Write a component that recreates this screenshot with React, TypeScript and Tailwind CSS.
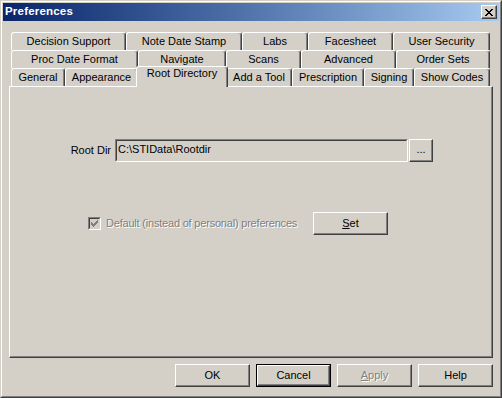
import React from "react";

const raised =
  "border border-t-white border-l-white border-r-[#404040] border-b-[#404040] shadow-[inset_-1px_-1px_0_#808080] bg-[#d4d0c8]";

const rows: { label: string; w: number; selected?: boolean }[][] = [
  [
    { label: "Decision Support", w: 115 },
    { label: "Note Date Stamp", w: 116 },
    { label: "Labs", w: 66 },
    { label: "Facesheet", w: 85 },
    { label: "User Security", w: 97 },
  ],
  [
    { label: "Proc Date Format", w: 127 },
    { label: "Navigate", w: 88 },
    { label: "Scans", w: 75 },
    { label: "Advanced", w: 95 },
    { label: "Order Sets", w: 94 },
  ],
  [
    { label: "General", w: 54 },
    { label: "Appearance", w: 73 },
    { label: "Root Directory", w: 88, selected: true },
    { label: "Add a Tool", w: 66 },
    { label: "Prescription", w: 72 },
    { label: "Signing", w: 50 },
    { label: "Show Codes", w: 76 },
  ],
];

function Tab({ label, w, selected }: { label: string; w: number; selected?: boolean }) {
  if (selected) {
    return (
      <div
        className="relative z-10 -mx-[2px] -mt-[2px] h-[21px] -mb-[1px] flex items-start justify-center pt-[1px] bg-[#d4d0c8] border-l border-t border-l-white border-t-white border-r border-r-[#404040] shadow-[inset_-1px_0_0_#808080] rounded-tl-[3px] rounded-tr-[3px]"
        style={{ width: w + 4 }}
      >
        {label}
      </div>
    );
  }
  return (
    <div
      className="h-[18px] flex items-center justify-center bg-[#d4d0c8] border-l border-t border-l-white border-t-white border-r border-r-[#404040] shadow-[inset_-1px_0_0_#808080] rounded-tl-[3px] rounded-tr-[3px]"
      style={{ width: w }}
    >
      {label}
    </div>
  );
}

function Button({ children, def, disabled }: { children: React.ReactNode; def?: boolean; disabled?: boolean }) {
  const inner = (
    <div
      className={`${raised} h-full w-full flex items-center justify-center ${
        disabled ? "text-[#808080] [text-shadow:1px_1px_0_#ffffff]" : "text-black"
      }`}
    >
      {children}
    </div>
  );
  if (def) {
    return <div className="w-[75px] h-[23px] border border-black">{inner}</div>;
  }
  return <div className="w-[75px] h-[23px]">{inner}</div>;
}

export default function App() {
  return (
    <div
      className="w-[502px] h-[398px] bg-[#d4d0c8] border border-t-[#d4d0c8] border-l-[#d4d0c8] border-r-[#404040] border-b-[#404040] text-[11px] text-black leading-none"
      style={{ fontFamily: '"Liberation Sans", Arial, sans-serif' }}
    >
      <div className="h-full border border-t-white border-l-white border-r-[#808080] border-b-[#808080] p-[1px] flex flex-col">
        {/* title bar */}
        <div className="h-[18px] flex items-center justify-between bg-gradient-to-r from-[#0a246a] to-[#a6caf0] pl-[2px] pr-[2px]">
          <span className="text-white font-bold text-[11.5px] tracking-[0.2px]">Preferences</span>
          <div className={`${raised} w-[16px] h-[14px] flex items-center justify-center`}>
            <svg width="8" height="7" viewBox="0 0 8 7" shapeRendering="crispEdges">
              <path d="M0 0h2v1H0zM6 0h2v1H6zM1 1h2v1H1zM5 1h2v1H5zM2 2h4v1H2zM3 3h2v1H3zM2 4h4v1H2zM1 5h2v1H1zM5 5h2v1H5zM0 6h2v1H0zM6 6h2v1H6z" fill="#000" />
            </svg>
          </div>
        </div>

        {/* tabs + panel */}
        <div className="pl-[6px] pr-[6px] pt-[11px]">
          <div className="pl-[2px] flex flex-col">
            {rows.map((row, i) => (
              <div key={i} className="flex">
                {row.map((t) => (
                  <Tab key={t.label} {...t} />
                ))}
              </div>
            ))}
          </div>
          <div className="h-[272px] border border-t-white border-l-white border-r-[#404040] border-b-[#404040] shadow-[inset_-1px_-1px_0_#808080] flex flex-col pt-[52px]">
            <div className="flex items-center pl-[57px]">
              <span className="w-[44px] text-right mr-[4px]">Root Dir</span>
              <div className="w-[293px] h-[23px] border border-t-[#808080] border-l-[#808080] border-r-white border-b-white">
                <div className="h-full border border-t-[#404040] border-l-[#404040] border-r-[#d4d0c8] border-b-[#d4d0c8] pl-[1px] pt-[3px] bg-[#d4d0c8]">
                  {"C:\\STIData\\Rootdir"}
                </div>
              </div>
              <div className="ml-[1px] w-[24px] h-[23px]">
                <div className={`${raised} h-full flex items-center justify-center pb-[2px]`}>...</div>
              </div>
            </div>

            <div className="flex items-center mt-[50px] pl-[78px]">
              <div className="w-[13px] h-[13px] border border-t-[#808080] border-l-[#808080] border-r-white border-b-white">
                <div className="w-full h-full border border-t-[#404040] border-l-[#404040] border-r-[#d4d0c8] border-b-[#d4d0c8] bg-[#d4d0c8] flex items-center justify-center">
                  <svg width="7" height="7" viewBox="0 0 7 7" shapeRendering="crispEdges">
                    <path d="M6 0h1v3H6zM5 1h1v3H5zM4 2h1v3H4zM3 3h1v3H3zM2 4h1v3H2zM1 3h1v3H1zM0 2h1v3H0z" fill="#808080" />
                  </svg>
                </div>
              </div>
              <span className="ml-[5px] w-[206px] whitespace-nowrap tracking-[-0.2px] text-[#808080] [text-shadow:1px_1px_0_#ffffff]">
                Default (instead of personal) preferences
              </span>
              <div className="ml-[1px] w-[75px] h-[23px]">
                <div className={`${raised} h-full flex items-center justify-center`}>
                  <span>
                    <span className="underline">S</span>et
                  </span>
                </div>
              </div>
            </div>
          </div>

          <div className="flex justify-end gap-[6px] mt-[6px]">
            <Button>OK</Button>
            <Button def>Cancel</Button>
            <Button disabled>
              <span>
                <span className="underline">A</span>pply
              </span>
            </Button>
            <Button>Help</Button>
          </div>
        </div>
      </div>
    </div>
  );
}
